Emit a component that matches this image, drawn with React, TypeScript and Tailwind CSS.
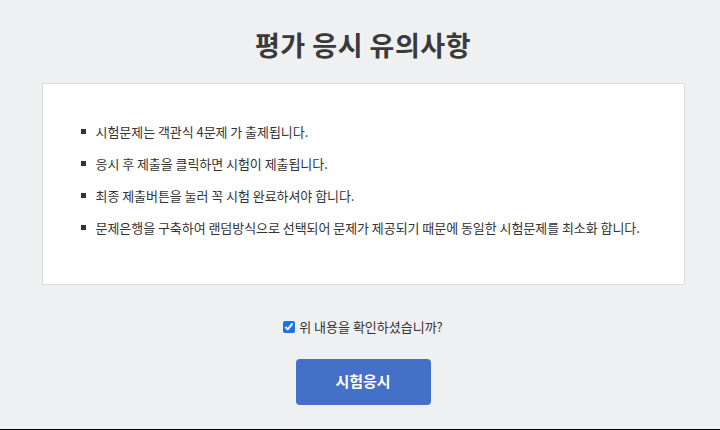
import React, { useState } from 'react';

const notices = [
  '시험문제는 객관식 4문제 가 출제됩니다.',
  '응시 후 제출을 클릭하면 시험이 제출됩니다.',
  '최종 제출버튼을 눌러 꼭 시험 완료하셔야 합니다.',
  '문제은행을 구축하여 랜덤방식으로 선택되어 문제가 제공되기 때문에 동일한 시험문제를 최소화 합니다.',
];

export default function App() {
  const [agreed, setAgreed] = useState(true);

  return (
    <div
      className="h-[430px] w-[720px] bg-[#eff0f2] border-b border-black pl-[6px] flex flex-col items-center text-[#333]"
      style={{ fontFamily: '"Noto Sans CJK KR", "Noto Sans", sans-serif' }}
    >
      <h1 className="mt-[26px] text-[27px] font-bold leading-[38px] tracking-[0.5px] text-[#3a3a3a]">
        평가 응시 유의사항
      </h1>

      <div className="mt-[19px] w-[643px] h-[202px] bg-white border border-[#dcdde0] pl-[38px] pt-[38px]">
        <ul className="flex flex-col gap-[13px]">
          {notices.map((text) => (
            <li key={text} className="flex items-center text-[13px] leading-[19px] tracking-[-0.05px] text-[#333]">
              <span className="w-[5px] h-[5px] bg-[#333] mr-[10px] shrink-0" />
              {text}
            </li>
          ))}
        </ul>
      </div>

      <label className="mt-[32px] flex items-center gap-[4px] text-[13px] tracking-[0px] text-[#333] cursor-pointer">
        <input
          type="checkbox"
          checked={agreed}
          onChange={(e) => setAgreed(e.target.checked)}
          className="w-[12px] h-[12px] accent-[#1a73e8]"
        />
        위 내용을 확인하셨습니까?
      </label>

      <button
        type="button"
        className="mt-[22px] w-[135px] h-[46px] rounded-[4px] bg-[#4470c7] text-white text-[15px] font-bold"
      >
        시험응시
      </button>
    </div>
  );
}
